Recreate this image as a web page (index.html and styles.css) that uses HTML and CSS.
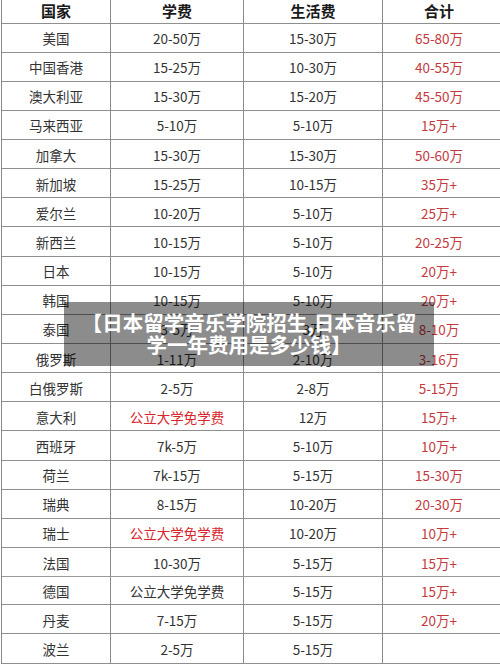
FILE: index.html
```html
<!DOCTYPE html>
<html lang="zh">
<head>
<meta charset="utf-8">
<link rel="stylesheet" href="styles.css">
</head>
<body>
<div class="page">
  <div class="table">
    <div class="row head"><div>国家</div><div>学费</div><div>生活费</div><div>合计</div></div>
    <div class="row"><div>美国</div><div>20-50万</div><div>15-30万</div><div class="sum">65-80万</div></div>
    <div class="row"><div>中国香港</div><div>15-25万</div><div>10-30万</div><div class="sum">40-55万</div></div>
    <div class="row"><div>澳大利亚</div><div>15-30万</div><div>15-20万</div><div class="sum">45-50万</div></div>
    <div class="row"><div>马来西亚</div><div>5-10万</div><div>5-10万</div><div class="sum">15万+</div></div>
    <div class="row"><div>加拿大</div><div>15-30万</div><div>15-30万</div><div class="sum">50-60万</div></div>
    <div class="row"><div>新加坡</div><div>15-25万</div><div>10-15万</div><div class="sum">35万+</div></div>
    <div class="row"><div>爱尔兰</div><div>10-20万</div><div>5-10万</div><div class="sum">25万+</div></div>
    <div class="row"><div>新西兰</div><div>10-15万</div><div>5-10万</div><div class="sum">20-25万</div></div>
    <div class="row"><div>日本</div><div>10-15万</div><div>5-10万</div><div class="sum">20万+</div></div>
    <div class="row"><div>韩国</div><div>10-15万</div><div>5-10万</div><div class="sum">20万+</div></div>
    <div class="row"><div>泰国</div><div>3-5万</div><div>3万</div><div class="sum">8-10万</div></div>
    <div class="row"><div>俄罗斯</div><div>1-11万</div><div>2-10万</div><div class="sum">3-16万</div></div>
    <div class="row"><div>白俄罗斯</div><div>2-5万</div><div>2-8万</div><div class="sum">5-15万</div></div>
    <div class="row"><div>意大利</div><div class="free">公立大学免学费</div><div>12万</div><div class="sum">15万+</div></div>
    <div class="row"><div>西班牙</div><div>7k-5万</div><div>5-10万</div><div class="sum">10万+</div></div>
    <div class="row"><div>荷兰</div><div>7k-15万</div><div>5-15万</div><div class="sum">15-30万</div></div>
    <div class="row"><div>瑞典</div><div>8-15万</div><div>10-20万</div><div class="sum">20-30万</div></div>
    <div class="row"><div>瑞士</div><div class="free">公立大学免学费</div><div>10-20万</div><div class="sum">10万+</div></div>
    <div class="row"><div>法国</div><div>10-30万</div><div>5-15万</div><div class="sum">15万+</div></div>
    <div class="row thick"><div>德国</div><div>公立大学免学费</div><div>5-15万</div><div class="sum">15万+</div></div>
    <div class="row"><div>丹麦</div><div>7-15万</div><div>5-15万</div><div class="sum">20万+</div></div>
    <div class="row"><div>波兰</div><div>2-5万</div><div>5-15万</div><div class="sum"></div></div>
  </div>
  <div class="banner">【日本留学音乐学院招生,日本音乐留<br>学一年费用是多少钱】</div>
</div>
</body>
</html>
```
FILE: styles.css
```css
html, body {
  margin: 0;
  padding: 0;
  background: #ffffff;
}
body {
  width: 500px;
  height: 667px;
  overflow: hidden;
  font-family: "Noto Sans CJK SC", "Noto Sans", sans-serif;
}
.page {
  position: relative;
  width: 500px;
  height: 667px;
}
.table {
  margin-left: 1px;
  border-left: 1px solid #8a8a8a;
  width: 499px;
}
.row {
  display: grid;
  grid-template-columns: 109px 133px 139px 1fr;
  height: 29.15px;
  box-sizing: border-box;
  border-bottom: 1px solid #8f8f8f;
}
.row.head {
  height: 23.5px;
}
.row.thick {
  border-top: 1px solid #9a9a9a;
  margin-top: -1px;
}
.row > div {
  box-sizing: border-box;
  border-right: 1px solid #8a8a8a;
  display: flex;
  align-items: center;
  justify-content: center;
  font-size: 13.5px;
  color: #333333;
  padding-top: 1px;
}
.row > div:last-child {
  border-right: none;
  padding-right: 6px;
}
.row.head > div {
  font-size: 15px;
  font-weight: 700;
  color: #1a1a1a;
  padding-top: 0;
  padding-bottom: 3px;
}
.sum {
  color: #c53a40 !important;
}
.free {
  color: #d9262c !important;
}
.banner {
  position: absolute;
  left: 64px;
  top: 302px;
  width: 370px;
  height: 64px;
  background: rgba(0, 0, 0, 0.45);
  color: #ffffff;
  font-weight: 700;
  font-size: 20.5px;
  line-height: 22px;
  text-align: center;
  box-sizing: border-box;
  padding-top: 9px;
}
```
